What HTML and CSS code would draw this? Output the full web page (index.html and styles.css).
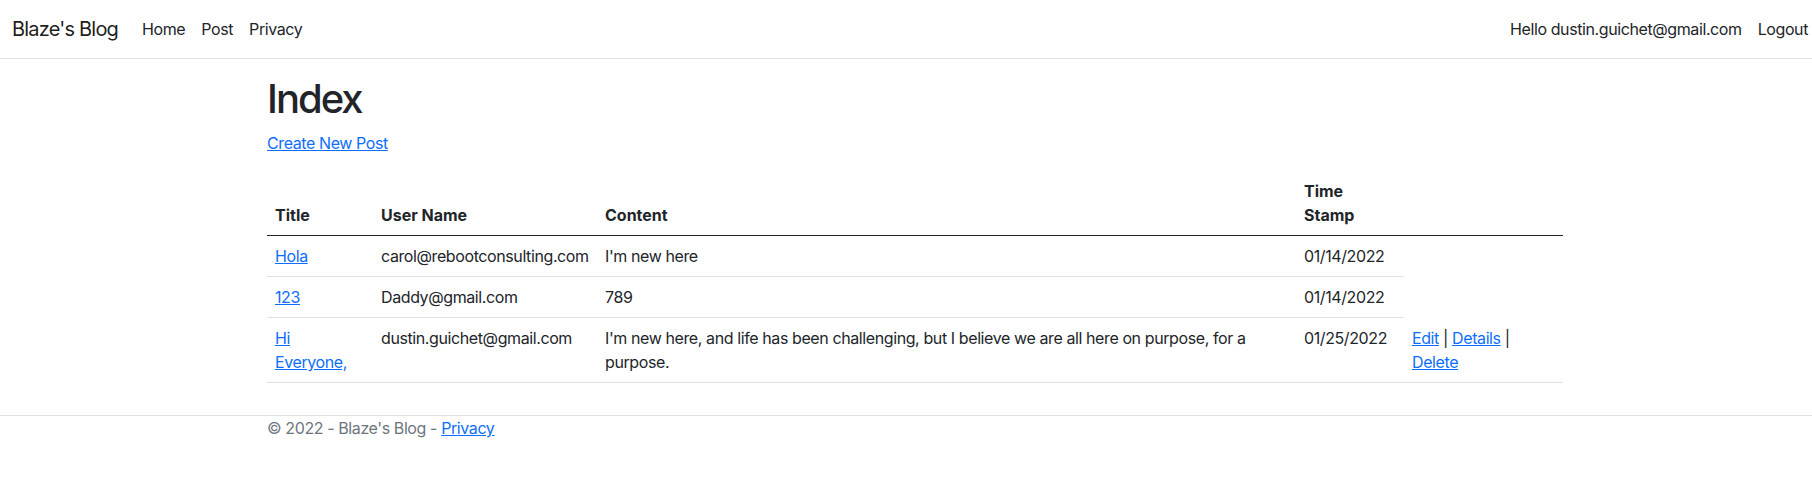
FILE: index.html
```html
<!DOCTYPE html>
<html lang="en">
<head>
<meta charset="utf-8">
<title>Index - Blaze's Blog</title>
<link rel="stylesheet" href="styles.css">
</head>
<body>
<header>
  <nav class="navbar">
    <div class="nav-wrap">
      <a class="brand" href="#">Blaze's Blog</a>
      <ul class="nav-main">
        <li><a class="nav-link" href="#">Home</a></li>
        <li><a class="nav-link" href="#">Post</a></li>
        <li><a class="nav-link" href="#">Privacy</a></li>
      </ul>
      <ul class="nav-user">
        <li><a class="nav-link" href="#">Hello dustin.guichet@gmail.com</a></li>
        <li><form class="logout-form"><button type="button" class="nav-link btn-link">Logout</button></form></li>
      </ul>
    </div>
  </nav>
</header>
<div class="container">
  <main class="main">
    <h1 class="title">Index</h1>
    <p class="create"><a href="#">Create New Post</a></p>
    <table class="table">
      <colgroup>
        <col class="c-title">
        <col class="c-user">
        <col class="c-content">
        <col class="c-time">
        <col class="c-actions">
      </colgroup>
      <thead>
        <tr>
          <th>Title</th>
          <th>User Name</th>
          <th>Content</th>
          <th>Time Stamp</th>
          <th></th>
        </tr>
      </thead>
      <tbody>
        <tr>
          <td><a href="#">Hola</a></td>
          <td>carol@rebootconsulting.com</td>
          <td>I'm new here</td>
          <td>01/14/2022</td>
        </tr>
        <tr>
          <td><a href="#">123</a></td>
          <td>Daddy@gmail.com</td>
          <td>789</td>
          <td>01/14/2022</td>
        </tr>
        <tr>
          <td><a href="#">Hi Everyone,</a></td>
          <td>dustin.guichet@gmail.com</td>
          <td>I'm new here, and life has been challenging, but I believe we are all here on purpose, for a purpose.</td>
          <td>01/25/2022</td>
          <td><a href="#">Edit</a> | <a href="#">Details</a> | <a href="#">Delete</a></td>
        </tr>
      </tbody>
    </table>
  </main>
</div>
<footer class="footer">
  <div class="container">&copy; 2022 - Blaze's Blog - <a href="#">Privacy</a></div>
</footer>
</body>
</html>
```
FILE: styles.css
```css
html, body {
  margin: 0;
  padding: 0;
}
body {
  font-family: Inter, "Liberation Sans", Arial, sans-serif;
  font-size: 16px;
  line-height: 1.5;
  letter-spacing: -0.025em;
  color: #212529;
  background: #fff;
  overflow: hidden;
}
a {
  color: #0d6efd;
  text-decoration: underline;
}

/* navbar */
.navbar {
  padding: 9px 0;
  border-bottom: 1px solid #dee2e6;
}
.nav-wrap {
  display: flex;
  align-items: center;
  padding-left: 12px;
}
.brand {
  font-size: 20px;
  line-height: 30px;
  letter-spacing: -0.04em;
  padding: 5px 0;
  margin-right: 16px;
  color: rgba(0, 0, 0, 0.9);
  text-decoration: none;
}
.nav-main,
.nav-user {
  display: flex;
  list-style: none;
  margin: 0;
  padding: 0;
}
.nav-main {
  flex: 1;
}
.nav-link {
  display: block;
  padding: 8px;
  color: #212529;
  text-decoration: none;
  line-height: 24px;
}
.logout-form {
  margin: 0;
}
.btn-link {
  background: none;
  border: 0;
  font: inherit;
  letter-spacing: inherit;
  line-height: 24px;
  padding: 8px 4px 8px 8px;
  cursor: pointer;
}

/* main */
.container {
  width: 1296px;
  margin-left: calc(50% - 639px);
}
.main {
  padding: 16px 0;
}
.title {
  font-size: 40px;
  line-height: 48px;
  font-weight: 500;
  letter-spacing: -0.05em;
  margin: 0 0 8px;
}
.create {
  margin: 0 0 16px;
}

/* table */
.table {
  width: 100%;
  table-layout: fixed;
  border-collapse: collapse;
  margin-bottom: 16px;
}
.table th,
.table td {
  padding: 8px;
  text-align: left;
  border-bottom: 1px solid #dee2e6;
}
.table td {
  vertical-align: top;
}
.table th {
  vertical-align: bottom;
  font-weight: 700;
  letter-spacing: 0;
  border-bottom: 1px solid #212529;
}
.c-title { width: 106px; }
.c-user { width: 224px; }
.c-content { width: 699px; }
.c-time { width: 108px; }
.c-actions { width: 159px; }

/* footer */
.footer {
  border-top: 1px solid #dee2e6;
  color: #6c757d;
  line-height: 24px;
  white-space: nowrap;
}
```
